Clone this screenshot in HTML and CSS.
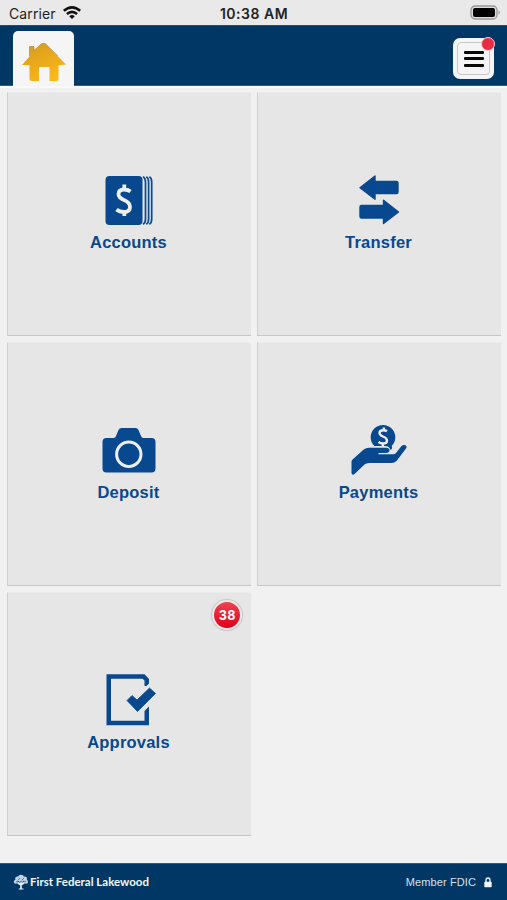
FILE: index.html
```html
<!DOCTYPE html>
<html lang="en">
<head>
<meta charset="utf-8">
<title>First Federal Lakewood</title>
<link rel="stylesheet" href="styles.css">
</head>
<body>
<div class="status">
  <div class="carrier"><span class="carrier-name">Carrier</span>
    <svg width="20" height="15" viewBox="0 0 20 15" fill="none" stroke="#111" stroke-width="2.6"><path d="M1.8 5.8Q10-1.2 18.2 5.8M4.9 9Q10 4.7 15.1 9"/><path d="M7.2 11.2Q10 8.8 12.8 11.2L10 14z" fill="#111" stroke="none"/></svg>
  </div>
  <div class="time">10:38 AM</div>
  <svg class="battery" width="32" height="16" viewBox="0 0 32 16"><rect x="1" y="1" width="26" height="13" rx="4" fill="#ddd" stroke="#999" stroke-width="1.3"/><rect x="3" y="3" width="22" height="9" rx="2" fill="#000"/><path d="M28.5 5.2q2.5 2.3 0 4.6z" fill="#999"/></svg>
</div>
<header class="header">
  <div class="home">
    <svg width="62" height="55" viewBox="13 31 62 55">
      <defs><linearGradient id="gold" x1="0" y1="0" x2="0.6" y2="1"><stop offset="0" stop-color="#d49a1c"/><stop offset="1" stop-color="#fdb71b"/></linearGradient></defs>
      <path d="M22 65L29.5 56.5V46.5H34V50.5L41.500 43.800Q43.500 42.500 45.500 43.800L66 64.500L58.500 65.200V79Q58.500 81 56.500 81H49.500V67H39V81H31.500Q29.500 81 29.500 79V65.200z" fill="url(#gold)"/>
      <path d="M29.500 56.500V46.500H34V50.500L41.500 43.800Q43.500 42.500 45.500 43.800L58 56" fill="none" stroke="#a87d2b" stroke-width=".6"/>
    </svg>
  </div>
  <div class="menu">
    <div class="menu-face"><i></i><i></i><i></i></div>
    <span class="dot"></span>
  </div>
</header>
<main class="grid">
  <div class="tile">
    <svg class="icon" viewBox="99 172 60 56">
      <rect x="105.500" y="176" width="37" height="49" rx="4" fill="#07488f"/>
      <path d="M143 176.800Q145.500 178 145.500 182V219Q145.500 223 143 224.300M146.300 176.800Q148.600 178 148.600 182V219Q148.600 223 146.300 224.300M149.400 176.800Q151.700 178 151.700 182V219Q151.700 223 149.400 224.300" fill="none" stroke="#07488f" stroke-width="1.700"/>
      <path d="M130.500 191.500Q128 189.500 124 189.500Q118.500 189.500 118.500 194.200Q118.500 197.500 124 200Q130 202.500 130 207Q130 212 124 212Q119.500 212 116.500 209.500M124.300 184.500V190M124.300 211V216" fill="none" stroke="#eee" stroke-width="3.800"/>
    </svg>
    <span class="label">Accounts</span>
  </div>
  <div class="tile">
    <svg class="icon" viewBox="349 172 60 56" fill="#07488f" stroke="#07488f" stroke-width="1.400" stroke-linejoin="round">
      <path d="M360 187.800L375 176V181.500H396.500Q398 181.500 398 183V192Q398 193.500 396.500 193.500H375V199.300z"/><path d="M398.500 212L383.500 200.300V205.500H361.500Q360 205.500 360 207V216.500Q360 218 361.500 218H383.500V223.500z"/>
    </svg>
    <span class="label">Transfer</span>
  </div>
  <div class="tile">
    <svg class="icon" viewBox="99 422 60 56">
      <path d="M106 438H114Q115.500 437.500 116 436L118.500 430Q119.500 428 121.500 428H135.500Q137.500 428 138.500 430L141 436Q141.500 437.500 143 438H151.500Q155.500 438 155.500 442V468.500Q155.500 472.500 151.500 472.500H106.500Q102.500 472.500 102.500 468.500V442Q102.500 438 106.500 438z" fill="#07488f"/>
      <circle cx="128.800" cy="454.300" r="12.200" fill="none" stroke="#eee" stroke-width="3"/>
    </svg>
    <span class="label">Deposit</span>
  </div>
  <div class="tile">
    <svg class="icon" viewBox="349 422 60 56">
      <path d="M374.300 446A12.300 12.300 0 1 1 391.700 446Q393 449 390.500 450Q389.500 446 385 446z" fill="#07488f"/>
      <path d="M387 431.300Q385.500 430.300 383.500 430.300Q379.500 430.300 379.500 433Q379.500 435 383 436.500Q387 438 387 440.700Q387 443.500 383 443.500Q380.500 443.500 378.500 442M383.800 427.500V430.500M382.800 443V446" fill="none" stroke="#eee" stroke-width="2.400"/>
      <path d="M352 460L364 449.300Q366 447.800 369 447.800H386Q389.500 447.800 389.500 450.300Q389.500 453 386 453H378.500V454.200H393Q395 454.200 396 453L401.500 446Q403.500 444.500 405.500 445.300Q407.500 446.500 406 448.500L396.500 461Q394.500 463 391.500 463H369Q366 463 364.500 464.500L354.500 474Q353 475.300 352 474.300Q351.500 473.800 351.500 472.500V461.500z" fill="#07488f"/>
    </svg>
    <span class="label">Payments</span>
  </div>
  <div class="tile">
    <span class="badge">38</span>
    <svg class="icon" viewBox="99 672 60 56">
      <path d="M146.500 686L149 683.500V679L144.500 674.300H106.500V725.300H149V706.500L144.500 711V720.800H111V678.800H142.500L144.500 680.500V686z" fill="#07488f"/>
      <path d="M127 700.500L132 695.500L137 700L149.500 688L155.500 693.500L137.500 711.500z" fill="#07488f" stroke="#07488f" stroke-width=".8" stroke-linejoin="round"/>
    </svg>
    <span class="label">Approvals</span>
  </div>
</main>
<footer class="footer">
  <div class="brand">
    <svg width="16" height="16" viewBox="0 0 16 16"><path d="M8 15V8M8 11L4.500 8.500M8 11L12 8" stroke="#e8f2fa" stroke-width="1.600" fill="none"/><path d="M5.800 15H10.500" stroke="#e8f2fa"/><g fill="#bed5e7"><circle cx="8" cy="3.800" r="3"/><circle cx="4.500" cy="5" r="2.400"/><circle cx="11.700" cy="5" r="2.400"/><circle cx="2.800" cy="7.800" r="2"/><circle cx="13" cy="7.800" r="2"/><circle cx="8" cy="7" r="2"/></g><path d="M5 6L7 4M9 6L11 4M3 8L5 7M11 8L13 7M7 8L9 7" stroke="#31618b" stroke-width=".8"/></svg>
    <span class="brand-name">First Federal Lakewood</span>
  </div>
  <div class="fdic"><span class="fdic-text">Member FDIC</span>
    <svg width="8" height="11" viewBox="0 0 8 11"><path d="M2 5V3.200Q2 1 4 1T6 3.200V5" fill="none" stroke="#e8f0f7" stroke-width="1.400"/><rect x=".3" y="4.700" width="7.400" height="5.600" rx=".7" fill="#f4f8fb"/></svg>
  </div>
</footer>
</body>
</html>
```
FILE: styles.css
```css
* { box-sizing: border-box; }
body { margin: 0; width: 507px; height: 900px; background: #f1f1f1; display: flex; flex-direction: column; overflow: hidden; font-family: "Liberation Sans", Arial, sans-serif; }
svg { display: block; flex: none; }
.status { height: 25px; background: #e9e9e9; display: grid; grid-template-columns: 1fr auto 1fr; align-items: center; padding: 2px 5px 0 9px; font-family: Inter, sans-serif; color: #222; }
.carrier { display: flex; align-items: center; gap: 6px; font-size: 14px; line-height: 20px; }
.carrier svg { margin-top: -2px; }
.carrier-name { letter-spacing: .1px; }
.time { font-size: 14px; font-weight: 600; letter-spacing: .5px; line-height: 20px; margin-left: -3px; }
.battery { justify-self: end; margin-top: -2px; }
.header { height: 61px; background: #003764; border-top: 1px solid #214d72; border-bottom: 1px solid #315b7e; display: flex; justify-content: space-between; padding: 5px 13px 0; flex: none; }
.home { width: 61px; height: 56px; background: #f5f5f5; border-radius: 5px 5px 0 0; }
.menu { position: relative; width: 41px; height: 41px; margin-top: 7px; padding: 4px; border-radius: 7px; background: #f5f5f5; }
.menu-face { height: 33px; border: 1px solid #c8c8c8; border-radius: 4px; display: flex; flex-direction: column; align-items: center; justify-content: center; gap: 3.500px; }
.menu-face i { width: 20px; height: 3px; background: #080808; border-radius: 1px; }
.dot { position: absolute; right: -1px; top: -1px; width: 14px; height: 14px; border-radius: 50%; background: #e92c42; border: 1px solid #f5ccd1; }
.grid { display: grid; grid-template-columns: 244px 244px; grid-auto-rows: 244px; gap: 6px; padding: 4px 0 0 7px; flex: 1; align-content: start; border-top: 2px solid #fafafa; }
.tile { position: relative; background: #e6e6e6; border-left: 1px solid #cfcfcf; border-bottom: 1px solid #c6c6c6; border-top: 1px solid #ebebeb; display: flex; flex-direction: column; align-items: center; padding: 79px 2px 0 0; }
.icon { width: 60px; height: 56px; }
.label { font-size: 16.500px; line-height: 20px; font-weight: 700; color: #07488f; margin-top: 4px; letter-spacing: .22px; }
.badge { position: absolute; top: 7px; right: 9px; width: 30px; height: 30px; border-radius: 50%; background: #e61228; background-image: linear-gradient(#ee4451, #df001b); border: 2px solid #f2e9e9; box-shadow: 0 0 1px 1px #c5c5c5; color: #fff; font-size: 14px; font-weight: 700; line-height: 26px; text-align: center; letter-spacing: .8px; padding-left: 1px; }
.footer { height: 37px; background: #003764; border-top: 1px solid #315b7e; display: flex; align-items: center; justify-content: space-between; padding: 0 15px 0 13px; flex: none; }
.brand, .fdic { display: flex; align-items: center; }
.brand { gap: 1px; }
.brand-name { font-family: Lato, sans-serif; font-weight: 700; font-size: 11.500px; color: #f3f7fa; white-space: nowrap; margin-top: -1px; }
.fdic { gap: 8px; }
.fdic-text { font-size: 11px; color: #d5e1eb; letter-spacing: .1px; }
```
